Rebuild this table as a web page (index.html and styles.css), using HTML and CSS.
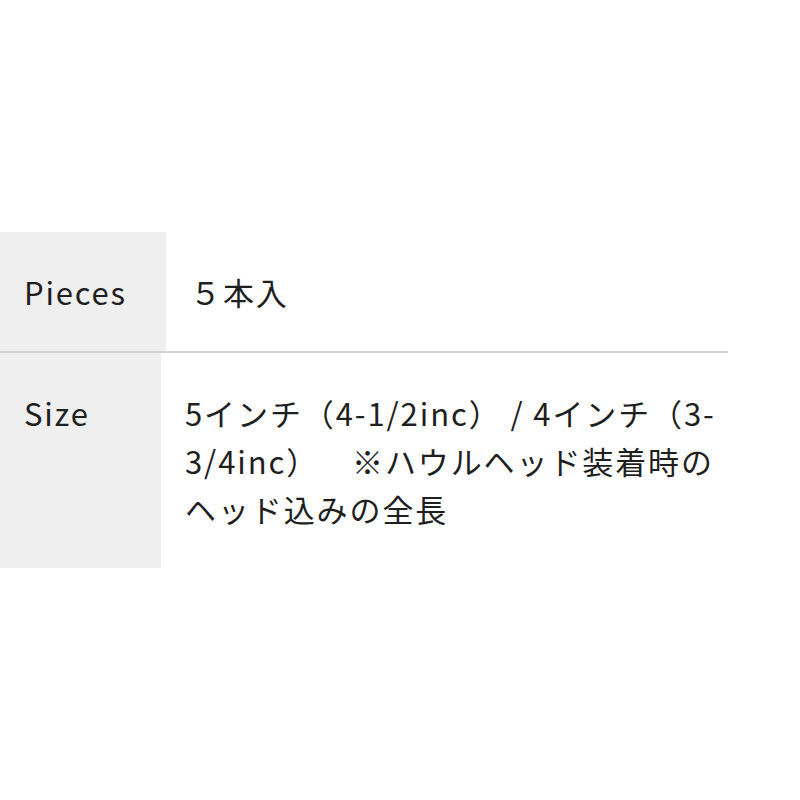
FILE: index.html
```html
<!DOCTYPE html>
<html lang="ja">
<head>
<meta charset="utf-8">
<title>Spec</title>
<link rel="stylesheet" href="styles.css">
</head>
<body>
<div class="spec">
  <div class="row row-first">
    <div class="label label-wide">Pieces</div>
    <div class="value">５本入</div>
  </div>
  <div class="row">
    <div class="label label-narrow">Size</div>
    <div class="value">5インチ（4-1/2inc） / 4インチ（3-3/4inc）　※ハウルヘッド装着時のヘッド込みの全長</div>
  </div>
</div>
</body>
</html>
```
FILE: styles.css
```css
html, body {
  margin: 0;
  padding: 0;
  background: #ffffff;
}
body {
  font-family: "Noto Sans CJK JP", "Noto Sans", sans-serif;
  color: #1f1f1f;
}
.spec {
  margin-top: 232px;
  width: 728px;
}
.row {
  display: flex;
}
.row-first {
  border-bottom: 2px solid #d4d4d4;
}
.label {
  flex: none;
  background: #efefef;
  padding: 36px 0 35px 24px;
  box-sizing: border-box;
  font-size: 31px;
  line-height: 48px;
  letter-spacing: 1.8px;
}
.label-wide { width: 166px; }
.label-narrow { width: 161px; }
.value {
  flex: 1;
  padding: 36px 2px 35px 24px;
  font-size: 31px;
  line-height: 48px;
  letter-spacing: 1.9px;
  text-spacing-trim: space-all;
}
```
